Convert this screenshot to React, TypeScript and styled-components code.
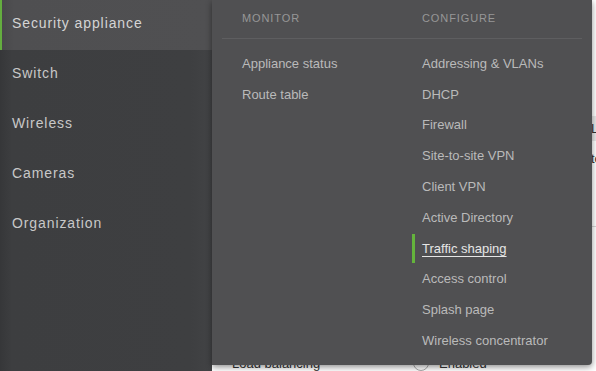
import React from "react";
import styled, { createGlobalStyle } from "styled-components";

const GlobalStyle = createGlobalStyle`
  html, body {
    margin: 0;
    padding: 0;
    background: #ffffff;
  }
  body {
    font-family: "Liberation Sans", Arial, sans-serif;
  }
`;

const sidebarItems = ["Security appliance", "Switch", "Wireless", "Cameras", "Organization"];
const monitorItems = ["Appliance status", "Route table"];
const configureItems = [
  "Addressing & VLANs",
  "DHCP",
  "Firewall",
  "Site-to-site VPN",
  "Client VPN",
  "Active Directory",
  "Traffic shaping",
  "Access control",
  "Splash page",
  "Wireless concentrator",
];

const App = () => (
  <>
    <GlobalStyle />
    <Shell>
      <Sidebar>
        {sidebarItems.map((item, i) => (
          <NavItem key={item} active={i === 0}>
            {item}
          </NavItem>
        ))}
      </Sidebar>
      <Page>
        <TableHead>
          <HeadCell>Li</HeadCell>
        </TableHead>
        <TableRow>
          <RowCell>to</RowCell>
        </TableRow>
        <Spacer />
        <FormRow>
          <FormLabel>Load balancing</FormLabel>
          <Radio />
          <FormValue>Enabled</FormValue>
        </FormRow>
      </Page>
      <Flyout>
        <HeaderRow>
          <SectionTitle>Monitor</SectionTitle>
          <SectionTitle>Configure</SectionTitle>
        </HeaderRow>
        <Divider />
        <Columns>
          <Column>
            {monitorItems.map((item) => (
              <MenuLink key={item}>{item}</MenuLink>
            ))}
          </Column>
          <Column>
            {configureItems.map((item) => (
              <MenuLink key={item} current={item === "Traffic shaping"}>
                {item}
              </MenuLink>
            ))}
          </Column>
        </Columns>
      </Flyout>
    </Shell>
  </>
);

const Shell = styled.div`
  position: relative;
  display: flex;
  width: 596px;
  height: 371px;
  overflow: hidden;
`;

const Sidebar = styled.nav`
  display: flex;
  flex-direction: column;
  width: 212px;
  flex-shrink: 0;
  background: linear-gradient(90deg, #363739 0, #3d3e40 12px, #3e3f41 190px, #424345 212px);
`;

type NavItemProps = { active?: boolean };
const NavItem = styled.div<NavItemProps>`
  display: flex;
  align-items: center;
  height: 50px;
  padding: 0 0 4px 12px;
  box-sizing: border-box;
  font-size: 14px;
  letter-spacing: 0.9px;
  color: #c8c8c8;
  ${(props) =>
    props.active &&
    `
    color: #d4d4d4;
    background: linear-gradient(90deg, #474749 0, #4f4f51 14px, #505052 100%);
    box-shadow: inset 2px 0 0 #64ad3f;
  `}
`;

const Page = styled.main`
  flex: 1;
  display: flex;
  flex-direction: column;
  background: #ffffff;
  padding-top: 116px;
  box-shadow: inset -3px 0 0 #e4e4e4;
`;

const TableHead = styled.div`
  display: flex;
  align-items: center;
  height: 29px;
  background: #e8e8e8;
  padding-left: 379px;
`;

const HeadCell = styled.span`
  font-size: 13px;
  color: #333333;
`;

const TableRow = styled.div`
  display: flex;
  align-items: center;
  height: 40px;
  padding-left: 379px;
`;

const RowCell = styled.span`
  font-size: 13px;
  color: #333333;
`;

const Spacer = styled.div`
  height: 59px;
  border-bottom: 1px solid #d8d8d8;
`;

const FormRow = styled.div`
  display: flex;
  align-items: center;
  margin-top: 128px;
  padding-left: 20px;
  font-size: 13px;
  color: #333333;
`;

const FormLabel = styled.span`
  width: 181px;
`;

const Radio = styled.span`
  width: 14px;
  height: 14px;
  border: 1px solid #aaaaaa;
  border-radius: 50%;
  margin-right: 10px;
`;

const FormValue = styled.span``;

const Flyout = styled.div`
  position: absolute;
  left: 212px;
  top: 0;
  width: 380px;
  height: 365px;
  padding: 0 10px;
  box-sizing: border-box;
  background: #505052;
  border-radius: 0 0 4px 0;
  box-shadow: 0 2px 6px rgba(0, 0, 0, 0.45);
`;

const HeaderRow = styled.div`
  display: grid;
  grid-template-columns: 180px 1fr;
  align-items: center;
  height: 38px;
  padding: 0 0 2px 20px;
  box-sizing: border-box;
`;

const SectionTitle = styled.span`
  font-size: 11px;
  letter-spacing: 0.9px;
  text-transform: uppercase;
  color: #979797;
`;

const Divider = styled.div`
  height: 1px;
  background: #5e5e60;
`;

const Columns = styled.div`
  display: grid;
  grid-template-columns: 180px 1fr;
  padding: 9px 0 0 20px;
`;

const Column = styled.div`
  display: flex;
  flex-direction: column;
`;

type MenuLinkProps = { current?: boolean };
const MenuLink = styled.span<MenuLinkProps>`
  position: relative;
  display: flex;
  align-items: center;
  height: 30.8px;
  font-size: 13px;
  color: ${(props) => (props.current ? "#e6e6e6" : "#bababa")};
  ${(props) =>
    props.current &&
    `
    text-decoration: underline;
    text-underline-offset: 3px;
    text-decoration-thickness: 1px;
    &::before {
      content: "";
      position: absolute;
      left: -10px;
      top: 1px;
      width: 3px;
      height: 29px;
      background: #64b43c;
    }
  `}
`;

export default App;
